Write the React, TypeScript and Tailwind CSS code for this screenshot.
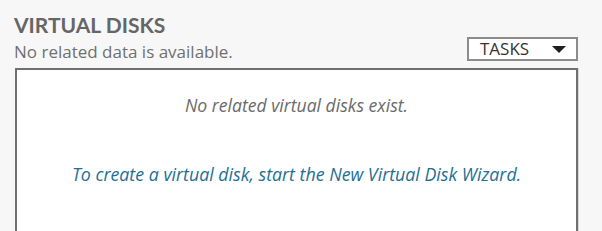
import React from 'react';

export default function App() {
  return (
    <div className="h-[231px] w-[602px] overflow-hidden bg-[#f7f7f7] font-['Open_Sans',sans-serif]">
      <div className="pl-[14px] pr-[24px] pt-[13px]">
        {/* Section header */}
        <h2 className="font-['Lato',sans-serif] text-[21px] font-bold leading-[24px] text-[#666666]">VIRTUAL DISKS</h2>
        <div className="flex h-[24px] items-start justify-between">
          <span className="mt-[3px] text-[17px] leading-[24px] text-[#707070]">No related data is available.</span>
          <button className="flex h-[24px] w-[111px] items-center justify-between border-2 border-[#8c8c8c] bg-white pl-[11px] pr-[10px] text-[17px] leading-[20px] text-[#333]">
            <span>TASKS</span>
            <svg width="14" height="7" viewBox="0 0 14 7">
              <path d="M0 0h14L7 7z" fill="#1f1f1f" />
            </svg>
          </button>
        </div>

        {/* Results panel */}
        <div className="ml-[1px] mt-[7px] h-[200px] w-[563px] border-2 border-[#707070] bg-white shadow-[1px_0_0_#d8d8d8]">
          <div className="flex flex-col items-center pt-[23px] italic">
            <p className="text-[17.6px] leading-[24px] text-[#6a6a6a]">No related virtual disks exist.</p>
            <p className="mt-[45px] text-[17.8px] leading-[24px] text-[#1d6f94]">
              To create a virtual disk, start the New Virtual Disk Wizard.
            </p>
          </div>
        </div>
      </div>
    </div>
  );
}
